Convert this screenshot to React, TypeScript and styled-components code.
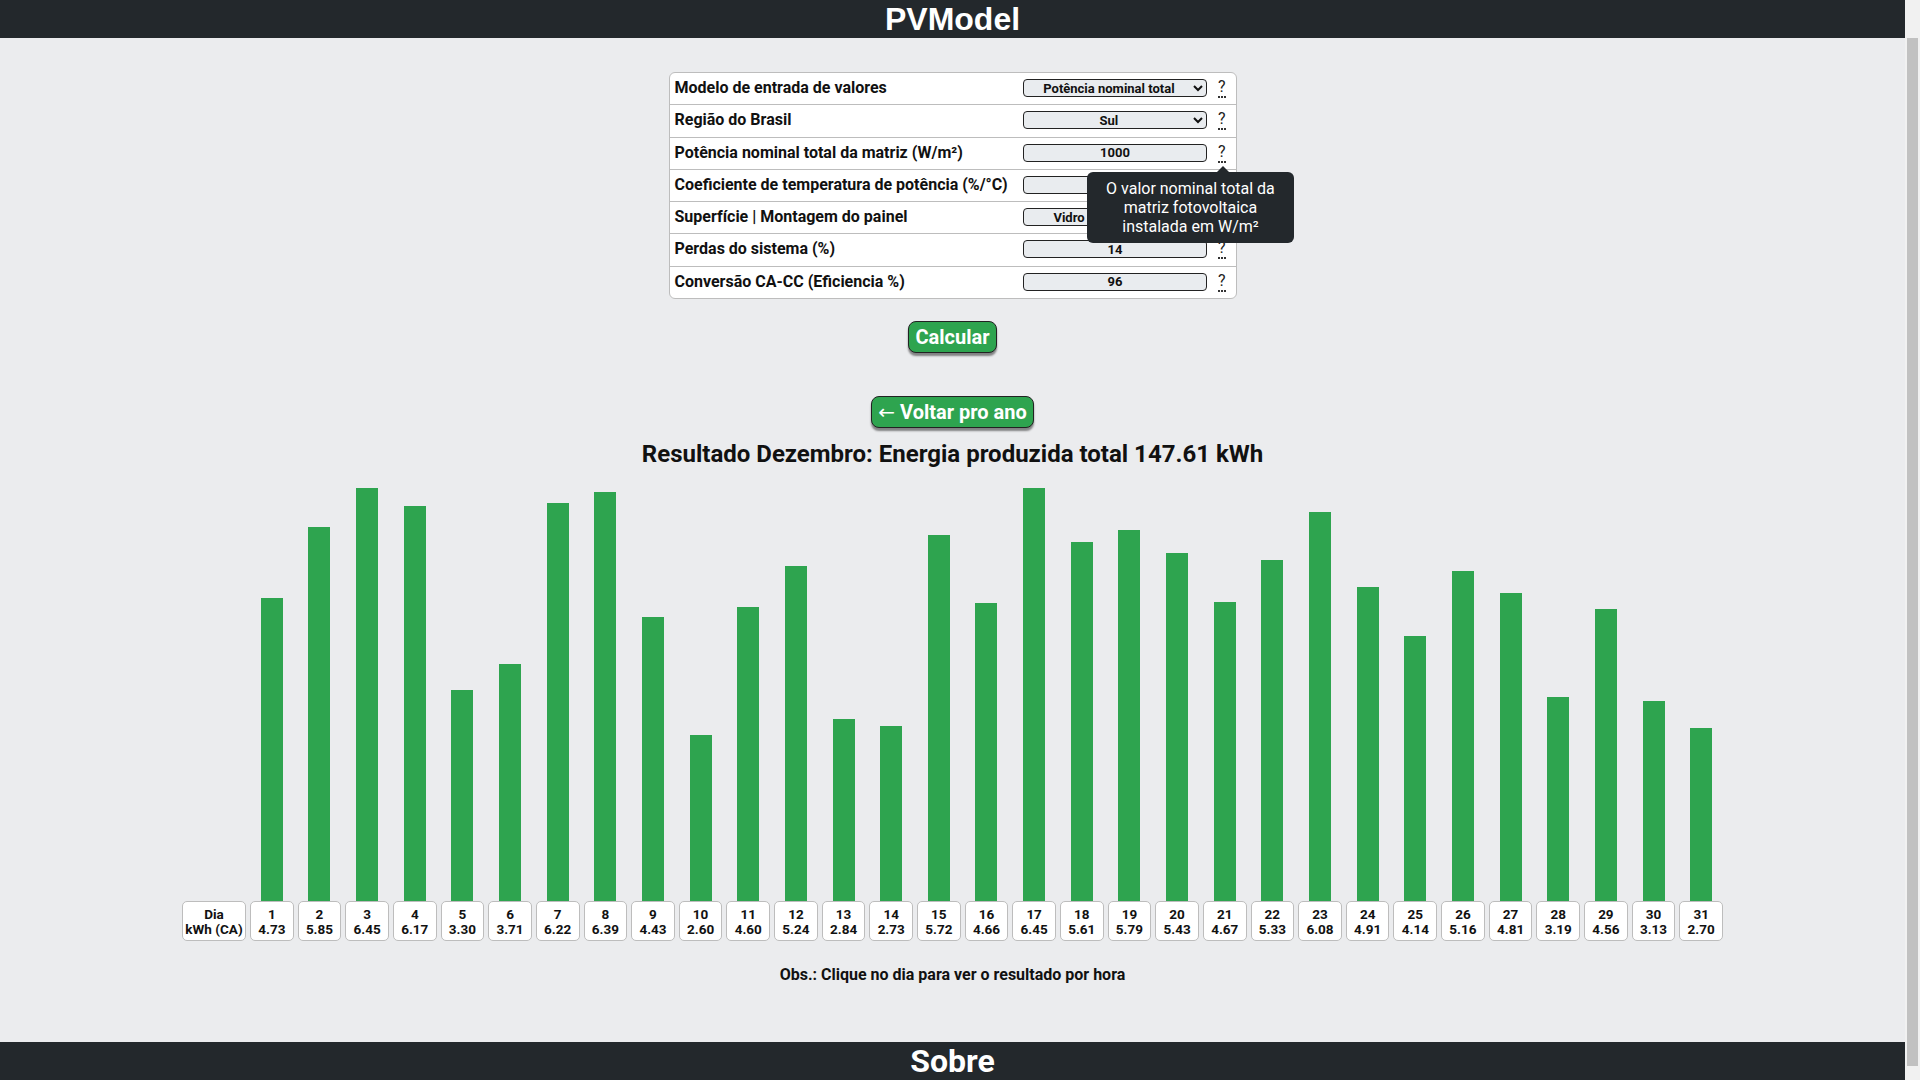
import React from "react";
import styled, { createGlobalStyle } from "styled-components";

// The reference shows the browser's vertical scrollbar; it is painted here
// as the page's right-hand gutter so the content keeps its 1905px width.
const GlobalStyle = createGlobalStyle`
  html {
    margin: 0;
    padding: 0;
    background:
      linear-gradient(#c1c1c1, #c1c1c1) no-repeat right 2px top 38px / 11px 1028px,
      #f1f1f1;
  }

  body {
    margin: 0 15px 0 0;
    padding: 0;
    min-height: 100vh;
    background: #ebecee;
    font-family: Roboto, "Liberation Sans", Arial, sans-serif;
    color: #111;
  }
`;

const Header = styled.header`
  height: 38px;
  background: #23282c;
  color: #fff;
  text-align: center;
`;

const Title = styled.h1`
  margin: 0;
  font-family: "Liberation Sans", Arial, sans-serif;
  font-size: 32px;
  line-height: 38px;
  font-weight: 700;
`;

const Main = styled.main`
  display: flex;
  flex-direction: column;
  align-items: center;
  padding-top: 34px;
`;

const FormCard = styled.div`
  width: 566px;
  background: #fff;
  border: 1px solid #bdbdbd;
  border-radius: 6px;
`;

const FormRow = styled.div`
  position: relative;
  display: flex;
  align-items: flex-start;
  height: 31.3px;
  padding: 0 10px 0 5px;

  & + & {
    border-top: 1px solid #bdbdbd;
  }
`;

const Label = styled.div`
  flex: 1;
  padding-top: 5px;
  font-size: 16px;
  line-height: 19px;
  font-weight: 700;
  color: #111;
`;

const fieldStyles = `
  box-sizing: border-box;
  width: 184px;
  height: 18px;
  margin-top: 6px;
  padding: 0 4px;
  border: 1px solid #222;
  border-radius: 4px;
  background: #e9ecef;
  font-family: Roboto, "Liberation Sans", Arial, sans-serif;
  font-size: 13px;
  font-weight: 700;
  color: #111;
  text-align: center;
  text-align-last: center;
`;

const Select = styled.select`
  ${fieldStyles}
`;

const Input = styled.input`
  ${fieldStyles}
`;

const HelpWrap = styled.span`
  position: relative;
  margin: 4px 0 0 11px;
`;

const Help = styled.abbr`
  display: inline-block;
  font-size: 16px;
  line-height: 19px;
  color: #222;
  text-decoration: none;
  border-bottom: 2px dotted #333;
  cursor: help;
`;

const Tooltip = styled.div`
  position: absolute;
  top: 30px;
  left: -131px;
  z-index: 5;
  width: 207px;
  box-sizing: border-box;
  padding: 7px 6px;
  background: #23282c;
  color: #fff;
  border-radius: 6px;
  font-size: 16px;
  line-height: 19px;
  text-align: center;

  &::before {
    content: "";
    position: absolute;
    top: -6px;
    left: 130px;
    border-left: 6px solid transparent;
    border-right: 6px solid transparent;
    border-bottom: 6px solid #23282c;
  }
`;

const ActionButton = styled.button<{ $mt: number }>`
  margin-top: ${({ $mt }) => $mt}px;
  padding: 3px 6px;
  background: #2ea44f;
  color: #fff;
  border: 1px solid #222;
  border-radius: 8px;
  box-shadow: 0 3px 2px rgba(0, 0, 0, 0.45);
  font-family: Roboto, "Liberation Sans", Arial, sans-serif;
  font-size: 20px;
  line-height: 24px;
  font-weight: 700;
  cursor: pointer;
`;

const Arrow = styled.span`
  font-family: "DejaVu Sans", sans-serif;
  font-weight: 400;
`;

const ResultTitle = styled.h2`
  margin: 12px 0 0;
  font-size: 24px;
  line-height: 28px;
  font-weight: 700;
  color: #111;
`;

const Chart = styled.div`
  display: grid;
  grid-template-columns: 64px repeat(31, 1fr);
  column-gap: 4px;
  align-items: end;
  width: 1541px;
  height: 453px;
  margin-top: 20px;
`;

const Column = styled.div`
  display: flex;
  flex-direction: column;
  align-items: center;
  cursor: pointer;
`;

const Bar = styled.div`
  width: 22px;
  background: #2ea44f;
`;

const DayBox = styled.div`
  box-sizing: border-box;
  width: 100%;
  height: 40px;
  padding: 5px 1px 3px;
  background: #fff;
  border: 1px solid #bdbdbd;
  border-radius: 5px;
  font-size: 13.5px;
  line-height: 15px;
  font-weight: 700;
  text-align: center;
  color: #111;
`;

const Note = styled.p`
  margin: 25px 0 0;
  font-size: 16px;
  line-height: 18px;
  font-weight: 700;
  color: #111;
`;

const Footer = styled.footer`
  margin-top: 58px;
  padding: 1px 0 30px;
  background: #23282c;
  color: #fff;
  text-align: center;
`;

const FooterTitle = styled.h2`
  margin: 0;
  font-size: 32px;
  line-height: 36px;
  font-weight: 700;
`;

const days = [
  4.73, 5.85, 6.45, 6.17, 3.3, 3.71, 6.22, 6.39, 4.43, 2.6, 4.6, 5.24, 2.84,
  2.73, 5.72, 4.66, 6.45, 5.61, 5.79, 5.43, 4.67, 5.33, 6.08, 4.91, 4.14, 5.16,
  4.81, 3.19, 4.56, 3.13, 2.7,
];

const MAX_BAR = 413;

const App: React.FC = () => {
  const max = Math.max(...days);

  return (
    <>
      <GlobalStyle />
      <Header>
        <Title>PVModel</Title>
      </Header>
      <Main>
        <FormCard>
          <FormRow>
            <Label>Modelo de entrada de valores</Label>
            <Select defaultValue="total">
              <option value="total">Potência nominal total</option>
              <option value="area">Área do painel</option>
            </Select>
            <HelpWrap>
              <Help title="Modelo de entrada">?</Help>
            </HelpWrap>
          </FormRow>
          <FormRow>
            <Label>Região do Brasil</Label>
            <Select defaultValue="sul">
              <option value="sul">Sul</option>
              <option value="sudeste">Sudeste</option>
              <option value="norte">Norte</option>
            </Select>
            <HelpWrap>
              <Help>?</Help>
            </HelpWrap>
          </FormRow>
          <FormRow>
            <Label>Potência nominal total da matriz (W/m²)</Label>
            <Input defaultValue="1000" />
            <HelpWrap>
              <Help>?</Help>
              <Tooltip>
                O valor nominal total da
                <br />
                matriz fotovoltaica
                <br />
                instalada em W/m²
              </Tooltip>
            </HelpWrap>
          </FormRow>
          <FormRow>
            <Label>Coeficiente de temperatura de potência (%/°C)</Label>
            <Input defaultValue="-0.47" />
            <HelpWrap>
              <Help>?</Help>
            </HelpWrap>
          </FormRow>
          <FormRow>
            <Label>Superfície | Montagem do painel</Label>
            <Select defaultValue="vidro">
              <option value="vidro">Vidro | Rack aberto</option>
            </Select>
            <HelpWrap>
              <Help>?</Help>
            </HelpWrap>
          </FormRow>
          <FormRow>
            <Label>Perdas do sistema (%)</Label>
            <Input defaultValue="14" />
            <HelpWrap>
              <Help>?</Help>
            </HelpWrap>
          </FormRow>
          <FormRow>
            <Label>Conversão CA-CC (Eficiencia %)</Label>
            <Input defaultValue="96" />
            <HelpWrap>
              <Help>?</Help>
            </HelpWrap>
          </FormRow>
        </FormCard>

        <ActionButton $mt={22}>Calcular</ActionButton>
        <ActionButton $mt={43}>
          <Arrow>←</Arrow> Voltar pro ano
        </ActionButton>

        <ResultTitle>
          Resultado Dezembro: Energia produzida total 147.61 kWh
        </ResultTitle>

        <Chart>
          <Column>
            <DayBox>
              Dia
              <br />
              kWh (CA)
            </DayBox>
          </Column>
          {days.map((v, i) => (
            <Column key={i}>
              <Bar style={{ height: (v / max) * MAX_BAR }} />
              <DayBox>
                {i + 1}
                <br />
                {v.toFixed(2)}
              </DayBox>
            </Column>
          ))}
        </Chart>

        <Note>Obs.: Clique no dia para ver o resultado por hora</Note>
      </Main>
      <Footer>
        <FooterTitle>Sobre</FooterTitle>
      </Footer>
    </>
  );
};

export default App;
